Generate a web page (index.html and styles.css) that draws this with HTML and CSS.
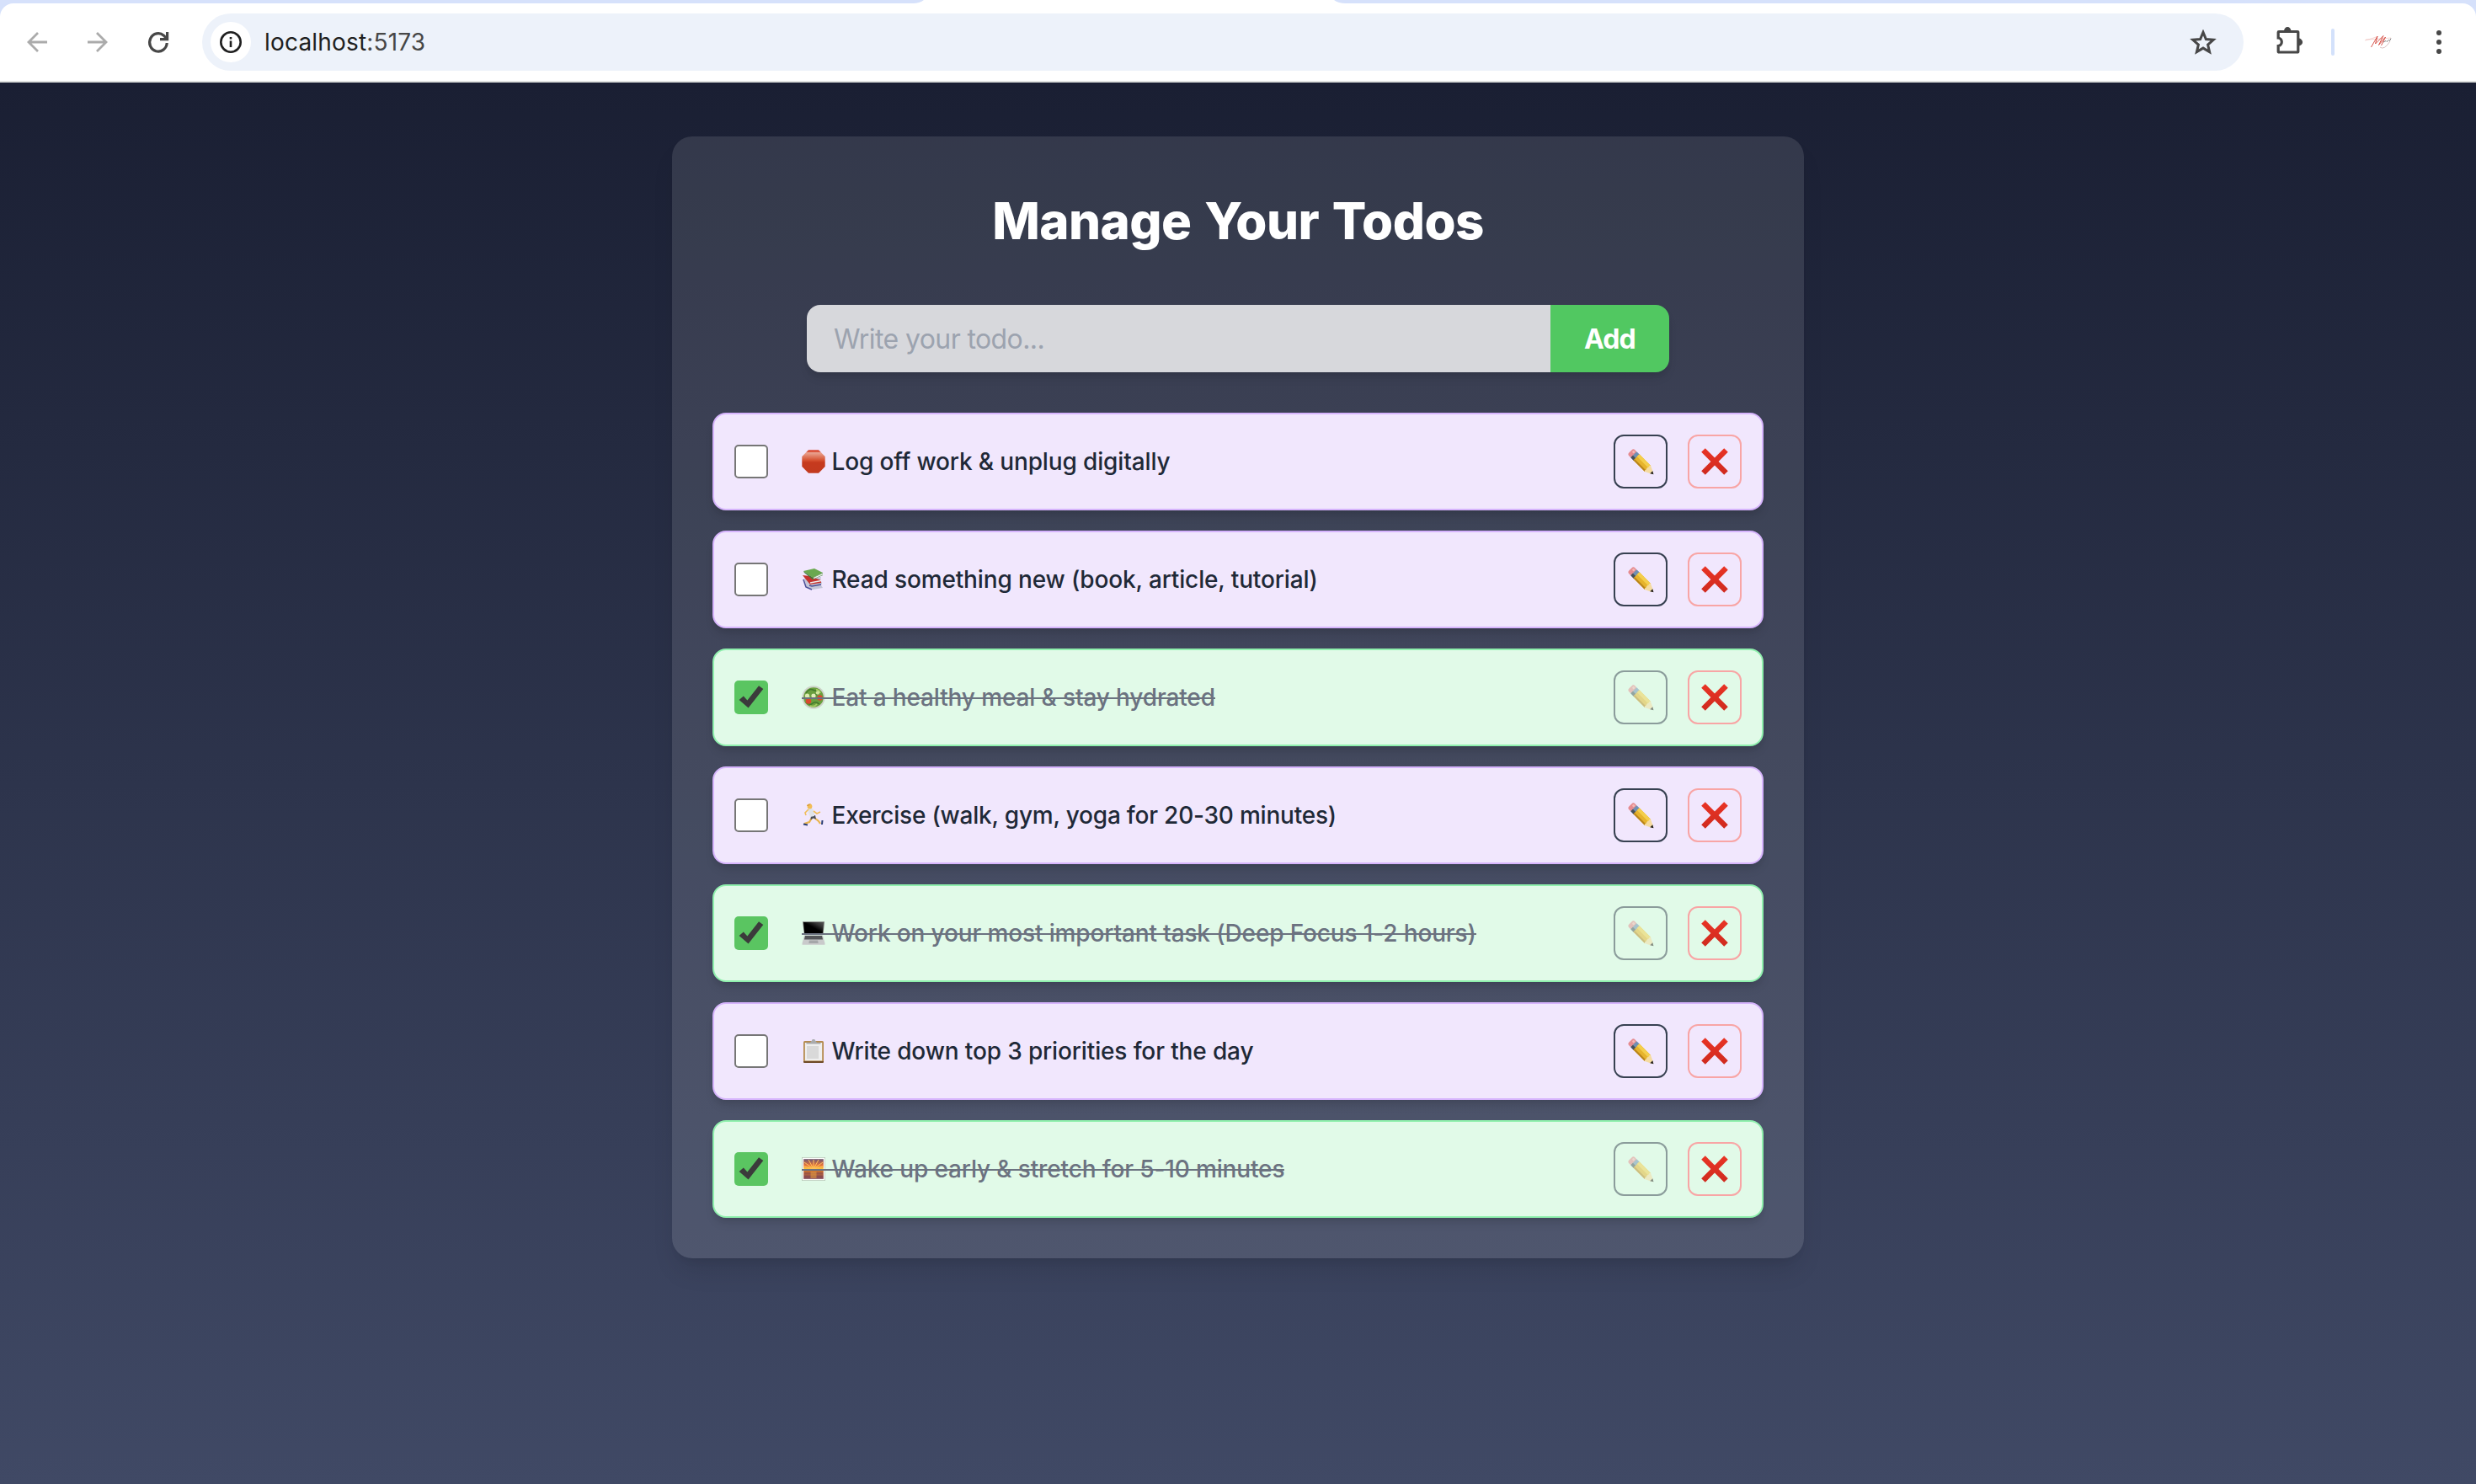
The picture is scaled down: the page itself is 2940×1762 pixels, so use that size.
FILE: index.html
```html
<!DOCTYPE html>
<html lang="en">
<head>
<meta charset="utf-8">
<title>Manage Your Todos</title>
<link rel="stylesheet" href="styles.css">
</head>
<body>
<svg class="sprite" aria-hidden="true">
  <defs>
    <linearGradient id="g-stop" x1="0" y1="0" x2="0" y2="1"><stop offset="0" stop-color="#d8402a"/><stop offset=".08" stop-color="#dc5a42"/><stop offset=".12" stop-color="#e9a391"/><stop offset=".45" stop-color="#d5502f"/><stop offset=".54" stop-color="#c63a1e"/><stop offset="1" stop-color="#c23a1f"/></linearGradient>
    <linearGradient id="g-screen" x1="0" y1="1" x2="1" y2="0"><stop offset=".5" stop-color="#000"/><stop offset=".75" stop-color="#333"/><stop offset="1" stop-color="#555"/></linearGradient>
    <linearGradient id="g-sky" x1="0" y1="0" x2="0" y2="1"><stop offset="0" stop-color="#6b5470"/><stop offset=".3" stop-color="#e5733a"/><stop offset=".52" stop-color="#ffd23d"/><stop offset=".6" stop-color="#c9702f"/><stop offset="1" stop-color="#7c4658"/></linearGradient>
    <linearGradient id="g-x" x1="0" y1="0" x2="0" y2="1"><stop offset="0" stop-color="#e93425"/><stop offset="1" stop-color="#cf2a1e"/></linearGradient>
    <symbol id="pencil" viewBox="0 0 32 32">
      <g transform="translate(4.3 4.2) rotate(45) scale(1.01 1.14)">
        <rect x="-.5" y="-4.4" width="6.6" height="8.8" rx="2.6" fill="#e58c90"/>
        <rect x="1.2" y="-3.1" width="3" height="2.4" rx="1" fill="#f4b8b6"/>
        <rect x="5" y="-4.4" width="5" height="8.8" fill="#6f8fb3"/>
        <rect x="5" y="1.2" width="5" height="3.2" fill="#46505a"/>
        <rect x="9.4" y="-4.4" width="19" height="8.8" fill="#e6b32c"/>
        <rect x="9.4" y="-4.4" width="19" height="3.4" fill="#f4ce4b"/>
        <rect x="9.4" y="2.6" width="19" height="1.8" fill="#b9841b"/>
        <path d="M28.2-4.4L36.6-.9v1.8L28.2 4.4q-1.7-1-.3-2.6-1.7-1.8 0-3.5-1.4-1.5.3-2.7z" fill="#f5dba0"/>
        <path d="M34.3-1.9L38 0l-3.700 1.900z" fill="#262320"/>
      </g>
    </symbol>
    <symbol id="cross" viewBox="0 0 32 32"><path d="M4.800.2L16 11.400 27.200.2 31.800 4.800 20.600 16 31.800 27.200 27.200 31.800 16 20.600 4.800 31.800.2 27.200 11.400 16 .2 4.800z" fill="url(#g-x)"/></symbol>
    <symbol id="tick" viewBox="0 0 40 40"><path d="M5.600 23L10.800 18.600 15.400 23.400 29 6.200 34.300 10 16.600 32.600z" fill="#3b3b3b"/></symbol>
  </defs>
</svg>

<header class="browser">
  <div class="tabstrip"><svg class="tab" viewBox="0 0 514 4"><path d="M0 4Q8 4 13 0H500Q505 4 514 4z" fill="#fff"/></svg></div>
  <div class="toolbar">
    <svg class="nav dim" viewBox="0 0 24 24"><path d="M24 12H2M13 1L2 12l11 11"/></svg>
    <svg class="nav dim" viewBox="0 0 24 24"><path d="M0 12h22M11 1l11 11-11 11"/></svg>
    <svg class="nav" viewBox="0 0 24 24"><path d="M22.200 13A10.300 10.700 0 1 1 18.500 4.200L22 8"/><path d="M22.600 0V8.600H14"/></svg>
    <div class="omnibox">
      <span class="info"><svg viewBox="0 0 26 26"><circle cx="13" cy="13" r="11.700"/><path d="M13 11.500v7.500M13 7v2.600"/></svg></span>
      <span class="url">localhost<span class="port">:5173</span></span>
      <svg class="star" viewBox="0 0 32 30"><path d="M16 3.400l3.400 8.100 8.800.8-6.600 5.800 2 8.500L16 22.100l-7.600 4.500 2-8.500L3.800 12.300l8.800-.8z"/></svg>
    </div>
    <svg class="puzzle" viewBox="0 0 32 32"><path d="M3.500 5.500H26a.8.8 0 0 1 .8.800V29.200a.8.8 0 0 1-.8.800H4a.8.800 0 0 1-.8-.8V22.500A4.800 4.800 0 0 0 3.200 13V6.300a.8.800 0 0 1 .8-.8z" fill="none" stroke="#474747" stroke-width="3.200"/><path d="M10 5a4.200 5 0 0 1 8.400 0zM27.500 13.600a4.600 4.400 0 0 1 0 8.800z" fill="#474747"/></svg>
    <span class="divider"></span>
    <svg class="signature" viewBox="0 0 32 18"><path d="M0 7Q8 5 15 2.500M1 6q8 0 30-2" stroke="#edbab5" stroke-width=".6"/><path d="M7.500 15L15 2 12.500 11 22 1.500 16.500 12.500 24.500 3 19.500 13" stroke="#d8544b" stroke-width="1"/><path d="M22 9l3-1.500 1 1 2.500-2 1 1L31 4.500" stroke="#666" stroke-width=".8"/><path d="M18 15q5 4 12-7" stroke="#c9a5a5" stroke-width=".7"/></svg>
    <svg class="kebab" viewBox="0 0 6 28"><circle cx="3" cy="3" r="3"/><circle cx="3" cy="14" r="3"/><circle cx="3" cy="25" r="3"/></svg>
  </div>
</header>

<main class="page">
  <section class="card">
    <h1 class="title">Manage Your Todos</h1>
    <form class="entry">
      <div class="field">Write your todo...</div>
      <button class="add" type="button">Add</button>
    </form>
    <ul class="list">
      <li class="todo">
        <span class="box"></span>
        <span class="label"><svg class="emoji" viewBox="0 0 28 28"><path d="M8 .3H20L27.700 8V20L20 27.700H8L.3 20V8z" fill="url(#g-stop)"/></svg><span class="text">Log off work &amp; unplug digitally</span></span>
        <span class="btn edit"><svg><use href="#pencil"/></svg></span><span class="btn del"><svg><use href="#cross"/></svg></span>
      </li>
      <li class="todo">
        <span class="box"></span>
        <span class="label"><svg class="emoji" viewBox="0 0 28 28"><path d="M3 13L6 24l7 2 12-2-2-3 1-3-2-3 1-4z" fill="#c3c5d6"/><path d="M2 14l3 9 7 3" fill="none" stroke="#4a4f96" stroke-width="1.600"/><path d="M9 21l3 1 11-2" fill="none" stroke="#4a4f96" stroke-width="1.400"/><path d="M1 9L5 14l5 6 13-2v-3L10 10z" fill="#c4322e"/><path d="M10 18l13-2.500" stroke="#eee" stroke-width="1.400"/><path d="M2 4L15 1l10 5L13 12z" fill="#6aa84f"/><path d="M2 4L3 6l10 8 12-5V6L13 12z" fill="#3d7a3a"/><path d="M14 12.600L25 7.500" stroke="#eef3ea" stroke-width="1.400"/></svg><span class="text">Read something new (book, article, tutorial)</span></span>
        <span class="btn edit"><svg><use href="#pencil"/></svg></span><span class="btn del"><svg><use href="#cross"/></svg></span>
      </li>
      <li class="todo done">
        <span class="box"><svg><use href="#tick"/></svg></span>
        <span class="label"><svg class="emoji" viewBox="0 0 28 28"><circle cx="14" cy="14" r="13.700" fill="#cfd3cb"/><circle cx="14" cy="14" r="11.800" fill="#6a9f3e"/><path d="M5 9q4-6 8-4t8 0M5 20q5 4 8 1t8 1M13 10q5 2 8-1" fill="none" stroke="#43792c" stroke-width="1.400"/><path d="M4 15q4-4 6 0M10 24q5 2 8-2M17 5q4 0 5 4" fill="none" stroke="#a5cb62" stroke-width="1.800"/><circle cx="6.500" cy="12" r="2.600" fill="#dcebb0"/><circle cx="14" cy="12" r="2.600" fill="#e2efb9"/><circle cx="19" cy="8.500" r="2.200" fill="#d1e59c"/><circle cx="8" cy="18.500" r="3.300" fill="#d9492f"/><circle cx="21.500" cy="14.500" r="3.200" fill="#d9492f"/></svg><span class="text">Eat a healthy meal &amp; stay hydrated</span></span>
        <span class="btn edit"><svg><use href="#pencil"/></svg></span><span class="btn del"><svg><use href="#cross"/></svg></span>
      </li>
      <li class="todo">
        <span class="box"></span>
        <span class="label"><svg class="emoji" viewBox="0 0 28 28"><path d="M12 17l-3 5-6 2M15 17l5 4 2 3" fill="none" stroke="#e9b44c" stroke-width="2.200"/><path d="M2 24.500l5 1M24.500 20l-.5 5" stroke="#2c3f74" stroke-width="2"/><path d="M11 14l5 0 1 4.500-3.500-1-3 2z" fill="#4a4f58"/><path d="M7 5l6 1 2 5 0 4-5 1-2-5z" fill="#dfe3ea"/><path d="M8 7L4 11l1 3M14 9l4 3 4-2" fill="none" stroke="#f0bd58" stroke-width="1.600"/><circle cx="9.500" cy="3.500" r="2.900" fill="#f3bd55"/><path d="M6 3q0-3 5-2.500L8 3z" fill="#dca03f"/></svg><span class="text tight">Exercise (walk, gym, yoga for 20-30 minutes)</span></span>
        <span class="btn edit"><svg><use href="#pencil"/></svg></span><span class="btn del"><svg><use href="#cross"/></svg></span>
      </li>
      <li class="todo done">
        <span class="box"><svg><use href="#tick"/></svg></span>
        <span class="label"><svg class="emoji" viewBox="0 0 28 28"><path d="M1 .2H27L25.500 16H3z" fill="#777"/><path d="M2 1H26L24.800 14H3.200z" fill="url(#g-screen)"/><path d="M3 16.500H25L27.500 26v1.800H.5V26z" fill="#c9cacb"/><path d="M4 17H24l1 4.500H3z" fill="#55575a"/><path d="M9 22.500h10l.7 3.500H8.300z" fill="#a5a7a9"/></svg><span class="text">Work on your most important task (Deep Focus 1-2 hours)</span></span>
        <span class="btn edit"><svg><use href="#pencil"/></svg></span><span class="btn del"><svg><use href="#cross"/></svg></span>
      </li>
      <li class="todo">
        <span class="box"></span>
        <span class="label"><svg class="emoji" viewBox="0 0 28 28"><rect x="2" y="2" width="24" height="26" rx="1.500" fill="#b48a4e"/><path d="M2 26h24v.5a1.500 1.500 0 0 1-1.500 1.500h-21A1.500 1.500 0 0 1 2 26.500z" fill="#6e4a26"/><rect x="3.800" y="4" width="20.400" height="21.400" fill="#efefef"/><rect x="6" y="8" width="14" height="15" fill="#d9d9d9"/><path d="M5.500 3.800h17v1.800h-17zM10 3.800l2-2.300a2 1.600 0 0 1 4 0l2 2.300z" fill="#a9abad"/></svg><span class="text">Write down top 3 priorities for the day</span></span>
        <span class="btn edit"><svg><use href="#pencil"/></svg></span><span class="btn del"><svg><use href="#cross"/></svg></span>
      </li>
      <li class="todo done">
        <span class="box"><svg><use href="#tick"/></svg></span>
        <span class="label"><svg class="emoji" viewBox="0 0 28 28"><rect x=".4" y=".4" width="27.200" height="27.200" fill="#fdfdfb" stroke="#b9cbbb" stroke-width=".8"/><rect x="2.200" y="2.200" width="23.600" height="23.600" fill="url(#g-sky)"/><path d="M14 14L3 6M14 14L8 3M14 14V3M14 14l6-11M14 14L25 6M14 14L3 11M14 14l11-3" stroke="#ffc15a" stroke-width="1"/><path d="M3 19h22M3 22.500h22" stroke="#8a4a4c" stroke-width="1.200"/><path d="M10.500 17h7v8h-7z" fill="#f0a63c" opacity=".5"/></svg><span class="text">Wake up early &amp; stretch for 5-10 minutes</span></span>
        <span class="btn edit"><svg><use href="#pencil"/></svg></span><span class="btn del"><svg><use href="#cross"/></svg></span>
      </li>
    </ul>
  </section>
</main>
</body>
</html>
```
FILE: styles.css
```css
* { box-sizing: border-box; }
body { margin: 0; min-height: 100vh; display: flex; flex-direction: column; font-family: Inter, Roboto, "Liberation Sans", sans-serif; background: #1a1f33; }
.sprite { position: absolute; width: 0; height: 0; }

.browser { height: 98px; background: #d6e1fb; border-bottom: 2px solid #dfe1df; display: flex; flex-direction: column; }
.tabstrip { height: 4px; padding-left: 1084px; }
.tab { display: block; width: 514px; height: 4px; }
.toolbar { flex: 1; display: flex; align-items: center; padding: 0 41px 0 32px; background: #fff; border-radius: 16px 16px 0 0; }
.nav { width: 24px; height: 24px; margin-right: 48px; fill: none; stroke: #474747; stroke-width: 3.2; overflow: visible; }
.nav.dim { stroke: #ababab; stroke-width: 2.8; }
.toolbar .omnibox { margin-left: -8px; }
.omnibox { width: 2424px; height: 68px; border-radius: 34px; background: #edf2fa; display: flex; align-items: center; padding: 0 32px 0 10px; }
.info { width: 48px; height: 48px; border-radius: 50%; background: #fff; display: grid; place-items: center; }
.info svg { width: 26px; height: 26px; fill: none; stroke: #1f1f1f; stroke-width: 2.6; }
.url { margin-left: 16px; font-size: 28px; letter-spacing: .18px; color: #1f1f1f; }
.port { color: #474747; }
.star { width: 32px; height: 30px; margin-left: auto; fill: none; stroke: #474747; stroke-width: 3; }
.puzzle { width: 32px; height: 32px; margin: 0 34px 4px 38px; overflow: visible; }
.divider { width: 4px; height: 32px; border-radius: 2px; background: #d3e1fb; }
.signature { width: 32px; height: 18px; margin: 0 auto 0 36px; fill: none; }
.kebab { width: 6px; height: 28px; fill: #474747; }

.page { flex: 1; padding-top: 64px; background: linear-gradient(#1a1f33, #404965); }
.card { width: 1344px; height: 1332px; margin: 0 auto; padding: 48px; border-radius: 24px; background: rgba(255, 255, 255, .11); box-shadow: 0 20px 30px -6px rgba(0, 0, 0, .1), 0 8px 12px -8px rgba(0, 0, 0, .1); }
.title { margin: 16px 0 64px; height: 72px; line-height: 72px; font-size: 60px; font-weight: 800; letter-spacing: -.55px; word-spacing: 3px; text-align: center; color: #fff; }
.entry { width: 1024px; height: 80px; margin: 0 auto 48px; display: flex; border-radius: 16px; overflow: hidden; box-shadow: 0 8px 12px -2px rgba(0, 0, 0, .1), 0 4px 8px -4px rgba(0, 0, 0, .1); }
.field { flex: 1; padding-left: 32px; line-height: 81px; font-size: 32px; letter-spacing: -.6px; color: #9ca3af; background: #d7d8dc; }
.add { width: 141px; border: 0; padding: 1px 0 0; background: #51c861; color: #fff; font: 700 32px Inter, sans-serif; letter-spacing: -.9px; }

.list { margin: 0; padding: 0; list-style: none; display: flex; flex-direction: column; gap: 24px; }
.todo { height: 116px; padding: 0 24px; display: flex; align-items: center; border: 2px solid #d6b4fc; border-radius: 16px; background: #f1e7fd; color: #1f2937; box-shadow: 0 8px 12px -2px rgba(0, 0, 0, .1), 0 4px 8px -4px rgba(0, 0, 0, .1); }
.box { width: 40px; height: 40px; margin-right: 40px; border: 2px solid #767676; border-radius: 5px; background: #fff; }
.label { position: relative; display: flex; align-items: center; font-size: 28px; font-weight: 500; letter-spacing: -.14px; white-space: nowrap; }
.tight { letter-spacing: -.21px; }
.emoji { width: 28px; height: 28px; margin-right: 7.5px; }
.btn { width: 64px; height: 64px; border: 2px solid #374151; border-radius: 12px; display: grid; place-items: center; }
.btn svg { width: 32px; height: 32px; }
.edit { margin-left: auto; margin-right: 24px; }
.del { border-color: #f8a5a5; }
.done { background: #e1fae8; border-color: #8ff0ad; color: #6b7280; }
.done .box { border: 0; background: #5ac561; }
.done .box svg { display: block; width: 40px; height: 40px; }
.done .label::after { content: ""; position: absolute; left: 0; right: 0; top: 50%; height: 2px; background: #6b7280; }
.done .edit { opacity: .5; }
```
